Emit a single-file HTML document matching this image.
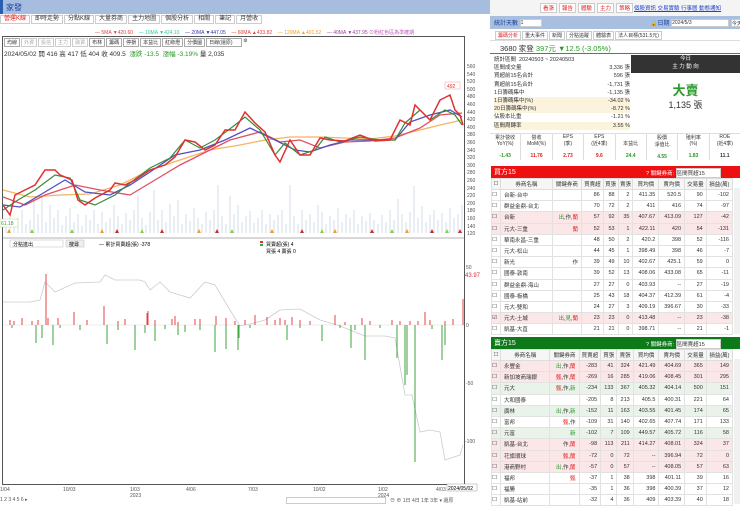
<!DOCTYPE html><html><head><meta charset="utf-8"><style>
*{margin:0;padding:0;box-sizing:border-box}
body{width:740px;height:504px;overflow:hidden;background:#fff;font-family:"Liberation Sans","Noto Sans CJK TC",sans-serif;font-size:6px;color:#333;position:relative}
.a{position:absolute}
.title{left:0;top:0;width:490px;height:14px;background:#a7bddf;border-left:3px solid #2a5fb0;color:#1a3f9a;font-size:8px;padding:2px 3px}
.tabs{left:0;top:15px;height:9px;display:flex}
.tabs span{border:1px solid #ccc;padding:0 3px;font-size:6px;line-height:7px;margin-right:1px;background:#fff}
.rt table{border-collapse:collapse;width:100%}
.rt td{border:1px solid #e2e2e2;height:11.2px;font-size:5.5px;text-align:right;padding-right:3px;white-space:nowrap}
.rt td:nth-child(2){text-align:left;padding-left:3px}
.rt td:first-child{width:9px}
.rt th{border:1px solid #ddd;height:11px;font-size:5.5px;font-weight:normal;background:#f6f6f6}
.pk td{background:#fbe6e8}.gn td{background:#eaf3ea}
.r{color:#e02020}.g{color:#2a9a2a}
</style></head><body>
<div class="a title">家發</div>
<div class="a tabs"><span style="color:#e02020">營運K線</span><span>即時走勢</span><span>分點K線</span><span>大量券商</span><span>主力地圖</span><span>個股分析</span><span>相關</span><span>筆記</span><span>月營收</span></div>
<div class="a" style="left:95px;top:29px;font-size:5px;white-space:nowrap;color:#e04040">— 5MA ▼420.60 &nbsp;&nbsp;&nbsp;<span style="color:#3c9">— 10MA ▼424.10</span> &nbsp;&nbsp;&nbsp;<span style="color:#3338aa">— 20MA ▼447.05</span> &nbsp;&nbsp;&nbsp;— 60MA ▲433.82 &nbsp;&nbsp;&nbsp;<span style="color:#f0a020">— 120MA ▲401.52</span> &nbsp;&nbsp;&nbsp;<span style="color:#a040a0">— 40MA ▼437.95 ⊙</span><span style="color:#c060c0">粉紅色區為準確期</span></div>
<div class="a" style="left:2px;top:36px;width:463px;height:449px;border:1px solid #555"></div>
<div class="a" style="left:4px;top:38px;font-size:5px;display:flex;gap:1px"><span style="border:1px solid #aaa;padding:0 2px">均線</span><span style="border:1px solid #ccc;color:#aaa;padding:0 2px">外資</span><span style="border:1px solid #ccc;color:#aaa;padding:0 2px">投信</span><span style="border:1px solid #ccc;color:#aaa;padding:0 2px">主力</span><span style="border:1px solid #ccc;color:#aaa;padding:0 2px">融資</span><span style="border:1px solid #aaa;padding:0 2px">布林</span><span style="border:1px solid #aaa;padding:0 2px">籌碼</span><span style="border:1px solid #aaa;padding:0 2px">停損</span><span style="border:1px solid #aaa;padding:0 2px">本益比</span><span style="border:1px solid #aaa;padding:0 2px">紅綠燈</span><span style="border:1px solid #aaa;padding:0 2px">分價圖</span><span style="border:1px solid #aaa;padding:0 2px;width:36px">日線(還原)</span> ⚙</div>
<div class="a" style="left:4px;top:48px;font-size:6.5px;white-space:nowrap">2024/05/02 開 416 高 417 低 404 收 409.5 &nbsp;<span class="g">漲跌 -13.5 &nbsp;漲幅 -3.19%</span> 量 2,035</div>
<svg class="a" style="left:0;top:0" width="490" height="504" viewBox="0 0 490 504">
<g font-size="5" fill="#555">
<text x="467" y="68">560</text><text x="467" y="76">540</text><text x="467" y="83">520</text><text x="467" y="91">500</text><text x="467" y="98">480</text><text x="467" y="106">460</text><text x="467" y="114">440</text><text x="467" y="121">420</text><text x="467" y="129">400</text><text x="467" y="136">380</text><text x="467" y="144">360</text><text x="467" y="152">340</text><text x="467" y="159">320</text><text x="467" y="167">300</text><text x="467" y="174">280</text><text x="467" y="182">260</text><text x="467" y="190">240</text><text x="467" y="197">220</text><text x="467" y="205">200</text><text x="467" y="212">180</text><text x="467" y="220">160</text><text x="467" y="228">140</text><text x="467" y="235">120</text>
<text x="466" y="269">50</text><text x="466" y="327">0</text><text x="466" y="385">-50</text><text x="465" y="443">-100</text>
<text x="0" y="491">1/04</text><text x="63" y="491">10/03</text><text x="130" y="491">1/03</text><text x="130" y="497">2023</text><text x="186" y="491">4/06</text><text x="248" y="491">7/03</text><text x="313" y="491">10/02</text><text x="378" y="491">1/02</text><text x="378" y="497">2024</text><text x="436" y="491">4/03</text>
</g>
<rect x="447" y="484" width="30" height="7" fill="#fff" stroke="#999" stroke-width=".5"/><text x="448" y="490" font-size="5">2024/05/02</text>
<text x="465" y="277" font-size="6" fill="#c03040">43.97</text>
<rect x="445" y="82" width="15" height="7" fill="#fff" stroke="#f99" stroke-width=".5"/><text x="447" y="88" font-size="5" fill="#e03030">492</text>
<g stroke="#d3dde9" stroke-width="1">
<path d="M6 233V222M10 233V215M14 233V225M18 233V218M22 233V210M26 233V224M30 233V220M34 233V200M38 233V214M42 233V195M46 233V222M50 233V205M54 233V218M58 233V210M62 233V225M66 233V216M70 233V208M74 233V222M78 233V214M82 233V226M86 233V215M90 233V220M94 233V210M98 233V224M102 233V212M106 233V222M110 233V218M114 233V205M118 233V216M122 233V224M126 233V213M130 233V220M134 233V210M138 233V196M142 233V218M146 233V225M150 233V212M154 233V190M158 233V220M162 233V210M166 233V222M170 233V204M174 233V216M178 233V200M182 233V224M186 233V214M190 233V221M194 233V208M198 233V218M202 233V224M206 233V212M210 233V220M214 233V210M218 233V185M222 233V216M226 233V224M230 233V196M234 233V214M238 233V205M242 233V222M246 233V216M250 233V211M254 233V223M258 233V218M262 233V210M266 233V224M270 233V214M274 233V220M278 233V215M282 233V210M286 233V224M290 233V185M294 233V216M298 233V224M302 233V210M306 233V220M310 233V214M314 233V222M318 233V205M322 233V212M326 233V224M330 233V216M334 233V220M338 233V208M342 233V222M346 233V214M350 233V218M354 233V210M358 233V224M362 233V216M366 233V221M370 233V213M374 233V220M378 233V224M382 233V215M386 233V222M390 233V210M394 233V220M398 233V199M402 233V214M406 233V222M410 233V212M414 233V186M418 233V218M422 233V206M426 233V222M430 233V215M434 233V210M438 233V220M442 233V213M446 233V222M450 233V208M454 233V218M458 233V214M462 233V205"/></g>
<rect x="0" y="219" width="18" height="8" fill="#fff" stroke="#bd8" stroke-width=".5"/><text x="1" y="225" font-size="5" fill="#585">61.18</text>
<path fill="none" stroke="#f3b560" stroke-width="1.3" d="M3 190L30 197L60 195L90 194L120 185L150 170L180 160L210 150L240 145L265 140L290 137L320 137L345 138L370 139L395 136L420 130L440 125L462 120"/>
<path fill="none" stroke="#e05060" stroke-width="1.3" d="M3 197L25 205L45 195L75 185L100 190L130 195L155 180L180 165L200 155L230 140L260 132L280 142L300 140L320 148L345 142L370 141L395 138L420 128L440 115L462 113"/>
<path fill="none" stroke="#5050c0" stroke-width="1.3" d="M3 205L20 207L40 195L65 180L85 192L110 195L130 185L150 172L175 155L200 150L225 140L250 128L275 140L295 150L310 152L330 145L350 140L375 140L395 140L410 122L430 115L450 110L462 117"/>
<path fill="none" stroke="#3a8a3a" stroke-width="1.2" d="M3 210L18 200L35 190L55 175L70 178L80 200L95 205L115 195L130 183L150 168L170 158L185 140L200 148L215 140L235 125L245 117L260 130L275 155L285 143L300 155L315 150L325 137L340 142L360 137L380 140L395 140L405 123L420 110L430 120L445 110L455 115L462 125"/>
<path fill="none" stroke="#e03030" stroke-width="1.5" d="M3 205L10 215L15 195L25 190L35 185L45 170L55 170L60 175L72 180L78 200L85 205L95 198L110 190L115 183L125 185L135 180L150 170L165 165L175 157L185 140L195 142L205 150L215 145L225 130L235 130L245 112L255 123L265 132L275 155L280 162L290 140L300 155L310 155L320 138L330 140L345 141L360 135L375 141L390 140L400 120L410 125L415 105L422 112L430 120L440 100L450 95L455 110L460 115L463 125"/>
<g fill="#e8a030"><polygon points="7,233 9,229 11,233"/><polygon points="100,233 102,229 104,233"/><polygon points="197,233 199,229 201,233"/><polygon points="270,233 272,229 274,233"/><polygon points="333,233 335,229 337,233"/><polygon points="405,233 407,229 409,233"/></g>
<g fill="#c03030"><polygon points="115,233 117,229 119,233"/><polygon points="160,233 162,229 164,233"/><polygon points="215,233 217,229 219,233"/><polygon points="300,233 302,229 304,233"/><polygon points="370,233 372,229 374,233"/><polygon points="430,233 432,229 434,233"/><polygon points="458,233 460,229 462,233"/></g>
<g fill="#8bd040"><polygon points="30,233 32,229 34,233"/><polygon points="70,233 72,229 74,233"/><polygon points="140,233 142,229 144,233"/><polygon points="230,233 232,229 234,233"/><polygon points="320,233 322,229 324,233"/><polygon points="390,233 392,229 394,233"/><polygon points="445,233 447,229 449,233"/></g>
<line x1="3" y1="238" x2="464" y2="238" stroke="#666" stroke-width=".5"/>
<rect x="10" y="240" width="53" height="7" fill="#fff" stroke="#bbb" stroke-width=".5"/><text x="13" y="246" font-size="5">分點進出</text>
<rect x="66" y="240" width="18" height="7" fill="#eee" stroke="#bbb" stroke-width=".5"/><text x="69" y="246" font-size="5">搜尋</text>
<text x="99" y="246" font-size="5">— 累計買賣超(張) -378</text>
<rect x="260" y="241" width="3" height="2" fill="#e03030"/><rect x="260" y="244" width="3" height="2" fill="#3a3"/>
<text x="266" y="246" font-size="5">買賣超(張) 4</text><text x="266" y="253" font-size="5">買張 4 賣張 0</text>
<path fill="none" stroke="#ccc" stroke-width=".8" d="M3 302L30 302L40 300L45 282L55 292L75 283L100 282L105 275L115 280L140 280L145 282L150 290L160 282L170 292L190 298L205 282L215 285L230 310L240 326L250 324L265 320L280 310L300 309L320 320L340 326L365 336L385 336L395 338L405 395L412 395L420 432L430 430L440 432L445 460L460 455L463 445"/>
<line x1="3" y1="325" x2="464" y2="325" stroke="#ddd" stroke-width=".5"/>
<g stroke="#e03030" stroke-width=".9">
<path d="M46 325V274M48 325V318M74 325V312M104 325V306M148 325V311M147 325V313M172 325V319M175 325V316M118 325V321M22 325V318M38 325V320M58 325V318M292 325V317M226 325V318M200 325V319M216 325V316M195 325V319M235 325V321M255 325V315M267 325V317M280 325V318M285 325V320M335 325V315M362 325V318M392 325V320M425 325V312M430 325V320M453 325V319M463 325V299M10 325V320M14 325V321M32 325V321M87 325V320M125 325V319M155 325V320M178 325V322M245 325V320M275 325V320M300 325V320M310 325V321M345 325V322M370 325V321M400 325V321M410 325V321M418 325V321M445 325V321"/></g>
<g stroke="#2a9a2a" stroke-width=".9">
<path d="M36 325V343M53 325V345M42 325V338M107 325V344M135 325V350M155 325V341M178 325V335M215 325V352M226 325V349M238 325V350M239 325V338M287 325V340M322 325V341M351 325V348M365 325V360M397 325V358M405 325V385M407 325V375M415 325V462M442 325V360M445 325V345M12 325V328M60 325V328M80 325V330M118 325V330M145 325V333M165 325V329M185 325V332M200 325V330M250 325V328M300 325V328M340 325V328M355 325V330M380 325V328M432 325V329"/></g>
</svg>
<div class="a" style="left:0;top:497px;font-size:5px;color:#555;white-space:nowrap">1 2 3 4 5 6 ▸</div>
<div class="a" style="left:286px;top:497px;width:100px;height:7px;border:1px solid #ccc"></div>
<div class="a" style="left:390px;top:497px;font-size:5px;color:#555;white-space:nowrap">⊖ ⊕ 1日 4日 1年 3年 ▾ 還原</div>

<div class="a" style="left:490px;top:0;width:250px;height:16px;background:#f4f4f4"></div>
<div class="a" style="left:540px;top:3px;font-size:5.5px;display:flex;gap:2px;color:#e02020"><span style="border:1px solid #ccc;padding:0 2px;background:#fff">看漲</span><span style="border:1px solid #ccc;padding:0 2px;background:#fff">報告</span><span style="border:1px solid #ccc;padding:0 2px;background:#fff">體驗</span><span style="border:1px solid #ccc;padding:0 2px;background:#fff">主力</span><span style="border:1px solid #ccc;padding:0 2px;background:#fff">策略</span></div>
<div class="a" style="left:634px;top:4px;font-size:5.5px;color:#2244cc;text-decoration:underline;white-space:nowrap">個股資訊 交易實驗 行事曆 動態通知</div>
<div class="a" style="left:490px;top:16px;width:250px;height:13px;background:#a9bfe0"></div>
<div class="a" style="left:494px;top:18px;font-size:6px;color:#1a3f9a">統計天數 <span style="display:inline-block;width:22px;height:8px;background:#fff;border:1px solid #ccc;color:#333;font-size:5px;vertical-align:middle">1</span></div>
<div class="a" style="left:650px;top:18px;font-size:6px;color:#1a3f9a;white-space:nowrap">🔒日期 <span style="display:inline-block;width:58px;height:8px;background:#fff;border:1px solid #ccc;color:#333;font-size:5px;vertical-align:middle">2024/5/3</span> <span style="display:inline-block;height:8px;background:#fff;border:1px solid #ccc;color:#333;font-size:5px;vertical-align:middle">今天</span></div>
<div class="a" style="left:495px;top:31px;font-size:5px;display:flex;gap:1px;white-space:nowrap"><span style="border:1px solid #ccc;padding:0 2px;color:#e02020">籌碼分析</span><span style="border:1px solid #ccc;padding:0 2px">重大事件</span><span style="border:1px solid #ccc;padding:0 2px">新聞</span><span style="border:1px solid #ccc;padding:0 2px">分點追蹤</span><span style="border:1px solid #ccc;padding:0 2px">體驗表</span><span style="border:1px solid #ccc;padding:0 2px">法人目標(531.5元)</span></div>
<div class="a" style="left:490px;top:40px;width:250px;height:14px;border-top:1px solid #ddd;border-bottom:1px solid #2a9a2a"></div>
<div class="a" style="left:500px;top:43px;font-size:7.5px;white-space:nowrap">3680 家登 <span class="g">397元 ▼12.5 (-3.05%)</span></div>
<div class="a" style="left:494px;top:56px;width:136px;font-size:5.5px;line-height:8.2px">
<div>統計區間 &nbsp;20240503 ~ 20240503</div>
<div>區間成交量<span style="float:right">3,336 張</span></div>
<div>買超前15名合計<span style="float:right">596 張</span></div>
<div>賣超前15名合計<span style="float:right">-1,731 張</span></div>
<div>1日籌碼集中<span style="float:right">-1,135 張</span></div>
<div style="background:#fbf3dc">1日籌碼集中(%)<span style="float:right">-34.02 %</span></div>
<div style="background:#fbf3dc">20日籌碼集中(%)<span style="float:right">-8.72 %</span></div>
<div>佔股本比重<span style="float:right">-1.21 %</span></div>
<div style="background:#fbf3dc">區間周轉率<span style="float:right">3.55 %</span></div></div>
<div class="a" style="left:631px;top:55px;width:109px;height:18px;background:#333;color:#fff;font-size:5.5px;text-align:center;line-height:8px">今日<br>主 力 動 向</div>
<div class="a" style="left:631px;top:80px;width:109px;text-align:center;font-size:13px;color:#2a9a2a;font-weight:bold">大賣</div>
<div class="a" style="left:631px;top:98px;width:109px;text-align:center;font-size:9px">1,135 張</div>
<div class="a" style="left:490px;top:133px;width:250px;border-top:1px solid #ddd;display:flex;font-size:5px;text-align:center">
<div style="flex:1;border-right:1px solid #ddd">累計營收<br>YoY(%)<br><br><b class="g">-1.43</b></div><div style="flex:1;border-right:1px solid #ddd">營收<br>MoM(%)<br><br><b class="r">11.76</b></div><div style="flex:1;border-right:1px solid #ddd">EPS<br>(季)<br><br><b class="r">2.73</b></div><div style="flex:1;border-right:1px solid #ddd">EPS<br>(近4季)<br><br><b class="r">9.6</b></div><div style="flex:1;border-right:1px solid #ddd"><br>本益比<br><br><b class="g">24.4</b></div><div style="flex:1;border-right:1px solid #ddd">股價<br>淨值比<br><br><b class="g">4.55</b></div><div style="flex:1;border-right:1px solid #ddd">殖利率<br>(%)<br><br><b class="g">1.83</b></div><div style="flex:1">ROE<br>(近4季)<br><br><b>11.1</b></div></div>

<div class="a" style="left:491px;top:166px;width:249px;height:12px;background:#ee1010;color:#fff;font-size:7px;padding:1px 3px">買方15<span style="position:absolute;left:155px;top:2px;font-size:5.5px">? 關鍵券商: <span style="background:#fff;color:#333;display:inline-block;width:45px;border:1px solid #ccc">區間買超15</span></span></div>
<div class="a rt" style="left:491px;top:178px;width:242px"><table>
<tr><th>☐</th><th>券商名稱</th><th>關鍵券商</th><th>買賣超</th><th>買張</th><th>賣張</th><th>買均價</th><th>賣均價</th><th>交易量</th><th>損益(萬)</th></tr>
<tr><td>☐</td><td>台新-台中</td><td></td><td>86</td><td>88</td><td>2</td><td>411.35</td><td>520.5</td><td>90</td><td>-102</td></tr>
<tr><td>☐</td><td>群益金鼎-台北</td><td></td><td>70</td><td>72</td><td>2</td><td>411</td><td>416</td><td>74</td><td>-97</td></tr>
<tr class="pk"><td>☐</td><td>台新</td><td><span class="g">出</span>,作,<span class="r">蘭</span></td><td>57</td><td>92</td><td>35</td><td>407.67</td><td>413.09</td><td>127</td><td>-42</td></tr>
<tr class="pk"><td>☐</td><td>元大-三重</td><td><span class="r">蘭</span></td><td>52</td><td>53</td><td>1</td><td>422.11</td><td>420</td><td>54</td><td>-131</td></tr>
<tr><td>☐</td><td>華南永昌-三重</td><td></td><td>48</td><td>50</td><td>2</td><td>420.2</td><td>398</td><td>52</td><td>-116</td></tr>
<tr><td>☐</td><td>元大-松山</td><td></td><td>44</td><td>45</td><td>1</td><td>398.49</td><td>398</td><td>46</td><td>-7</td></tr>
<tr><td>☐</td><td>新光</td><td>作</td><td>39</td><td>49</td><td>10</td><td>402.67</td><td>425.1</td><td>59</td><td>0</td></tr>
<tr><td>☐</td><td>國泰-敦南</td><td></td><td>39</td><td>52</td><td>13</td><td>408.06</td><td>433.08</td><td>65</td><td>-11</td></tr>
<tr><td>☐</td><td>群益金鼎-海山</td><td></td><td>27</td><td>27</td><td>0</td><td>403.93</td><td>--</td><td>27</td><td>-19</td></tr>
<tr><td>☐</td><td>國泰-板橋</td><td></td><td>25</td><td>43</td><td>18</td><td>404.37</td><td>412.39</td><td>61</td><td>-4</td></tr>
<tr><td>☐</td><td>元大-雙和</td><td></td><td>24</td><td>27</td><td>3</td><td>409.19</td><td>396.67</td><td>30</td><td>-33</td></tr>
<tr class="pk"><td>☑</td><td>元大-土城</td><td><span class="g">出</span>,<span class="g">見</span>,<span class="r">蘭</span></td><td>23</td><td>23</td><td>0</td><td>413.48</td><td>--</td><td>23</td><td>-38</td></tr>
<tr><td>☐</td><td>凱基-大直</td><td></td><td>21</td><td>21</td><td>0</td><td>398.71</td><td>--</td><td>21</td><td>-1</td></tr>
</table></div>
<div class="a" style="left:491px;top:337px;width:249px;height:12px;background:#0d7a1a;color:#fff;font-size:7px;padding:1px 3px">賣方15<span style="position:absolute;left:155px;top:2px;font-size:5.5px">? 關鍵券商: <span style="background:#fff;color:#333;display:inline-block;width:45px;border:1px solid #ccc">區間賣超15</span></span></div>
<div class="a rt" style="left:491px;top:349px;width:242px"><table>
<tr><th>☐</th><th>券商名稱</th><th>關鍵券商</th><th>買賣超</th><th>買張</th><th>賣張</th><th>買均價</th><th>賣均價</th><th>交易量</th><th>損益(萬)</th></tr>
<tr class="pk"><td>☐</td><td>永豐金</td><td><span class="g">出</span>,作,<span class="r">蘭</span></td><td>-283</td><td>41</td><td>324</td><td>421.49</td><td>404.69</td><td>365</td><td>149</td></tr>
<tr class="pk"><td>☐</td><td>新加坡商瑞銀</td><td><span class="r">甄</span>,作,<span class="r">蘭</span></td><td>-269</td><td>16</td><td>285</td><td>419.06</td><td>408.45</td><td>301</td><td>295</td></tr>
<tr class="gn"><td>☐</td><td>元大</td><td><span class="r">甄</span>,作,<span class="g">新</span></td><td>-234</td><td>133</td><td>367</td><td>405.32</td><td>404.14</td><td>500</td><td>151</td></tr>
<tr><td>☐</td><td>大和國泰</td><td></td><td>-205</td><td>8</td><td>213</td><td>405.5</td><td>400.31</td><td>221</td><td>64</td></tr>
<tr class="gn"><td>☐</td><td>廣林</td><td><span class="g">出</span>,作,<span class="g">新</span></td><td>-152</td><td>11</td><td>163</td><td>403.55</td><td>401.45</td><td>174</td><td>65</td></tr>
<tr><td>☐</td><td>富邦</td><td><span class="r">甄</span>,作</td><td>-109</td><td>31</td><td>140</td><td>402.65</td><td>407.74</td><td>171</td><td>133</td></tr>
<tr class="gn"><td>☐</td><td>元富</td><td><span class="g">新</span></td><td>-102</td><td>7</td><td>109</td><td>449.57</td><td>405.72</td><td>116</td><td>58</td></tr>
<tr class="pk"><td>☐</td><td>凱基-台北</td><td>作,<span class="r">蘭</span></td><td>-98</td><td>113</td><td>211</td><td>414.27</td><td>408.01</td><td>324</td><td>37</td></tr>
<tr class="pk"><td>☐</td><td>花旗環球</td><td><span class="r">甄</span>,<span class="r">蘭</span></td><td>-72</td><td>0</td><td>72</td><td>--</td><td>396.94</td><td>72</td><td>0</td></tr>
<tr class="pk"><td>☐</td><td>港商野村</td><td><span class="g">出</span>,作,<span class="r">蘭</span></td><td>-57</td><td>0</td><td>57</td><td>--</td><td>408.05</td><td>57</td><td>63</td></tr>
<tr><td>☐</td><td>福邦</td><td><span class="r">甄</span></td><td>-37</td><td>1</td><td>38</td><td>398</td><td>401.11</td><td>39</td><td>16</td></tr>
<tr><td>☐</td><td>福勝</td><td></td><td>-35</td><td>1</td><td>36</td><td>398</td><td>400.39</td><td>37</td><td>12</td></tr>
<tr><td>☐</td><td>凱基-站前</td><td></td><td>-32</td><td>4</td><td>36</td><td>409</td><td>403.39</td><td>40</td><td>18</td></tr>
</table></div>
<div class="a" style="left:734px;top:188px;width:6px;height:146px;background:#f0f0f0"></div>
<div class="a" style="left:734px;top:359px;width:6px;height:145px;background:#f0f0f0"></div>
</body></html>
